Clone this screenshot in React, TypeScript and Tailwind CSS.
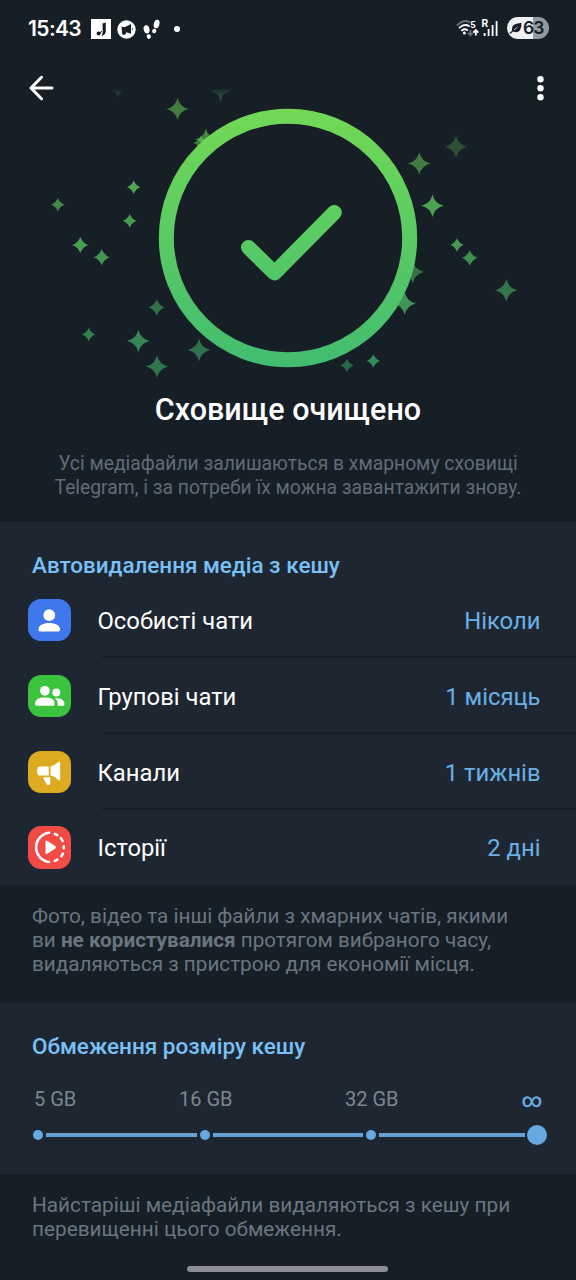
import type { ReactNode } from 'react';

type Star = { x: number; y: number; r: number; o: number };

const stars: Star[] = [
  { x: 177.5, y: 109, r: 11, o: 0.5 },
  { x: 206, y: 139.5, r: 11, o: 0.55 },
  { x: 201, y: 143, r: 7.5, o: 0.5 },
  { x: 133.7, y: 187.3, r: 6.7, o: 0.75 },
  { x: 57.8, y: 204.7, r: 6.7, o: 0.6 },
  { x: 129.7, y: 220.8, r: 6.9, o: 0.72 },
  { x: 80.3, y: 245, r: 8, o: 0.75 },
  { x: 101.7, y: 257.3, r: 8, o: 0.7 },
  { x: 156.7, y: 307.5, r: 8, o: 0.5 },
  { x: 88.7, y: 334.5, r: 6.7, o: 0.6 },
  { x: 138.3, y: 341, r: 11.2, o: 0.65 },
  { x: 157, y: 366.5, r: 11.2, o: 0.55 },
  { x: 199, y: 350, r: 11.2, o: 0.52 },
  { x: 456, y: 146.7, r: 11.2, o: 0.28 },
  { x: 419.3, y: 163.5, r: 11.2, o: 0.52 },
  { x: 432.5, y: 205.7, r: 11.2, o: 0.75 },
  { x: 457, y: 245, r: 6.7, o: 0.72 },
  { x: 469.7, y: 258, r: 7.7, o: 0.65 },
  { x: 506.3, y: 290.2, r: 11.2, o: 0.52 },
  { x: 412.7, y: 272, r: 11.2, o: 0.5 },
  { x: 404.7, y: 303.5, r: 11.2, o: 0.72 },
  { x: 347, y: 365.5, r: 6.7, o: 0.45 },
  { x: 373.3, y: 361, r: 6.7, o: 0.7 },
];

function starPath({ x, y, r }: Star) {
  // small stars are a bit fatter
  const k = r < 9 ? r * 0.28 : r * 0.19;
  return `M${x} ${y - r}Q${x + k} ${y - k} ${x + r} ${y}Q${x + k} ${y + k} ${x} ${y + r}Q${x - k} ${y + k} ${x - r} ${y}Q${x - k} ${y - k} ${x} ${y - r}Z`;
}

function StatusBar() {
  return (
    <div className="flex h-14 items-center justify-between pl-7 pr-[27px] text-white">
      <div className="flex items-center">
        <span className="w-[54px] whitespace-nowrap pt-px font-['Inter'] text-[21px] font-semibold leading-7 tracking-[-0.6px]">15:43</span>
        <svg className="ml-[9px] mt-0.5 h-5 w-5" viewBox="0 0 20 20">
          <rect width="20" height="20" fill="#fff" />
          <path d="M11.5 4.4L14.8 3.6V12Q14.8 16 10.5 17Q11.7 14.8 11.7 12.8Z" fill="#161e26" />
          <circle cx="7.6" cy="14.6" r="2" fill="#161e26" />
          <path d="M8.8 15L10.6 12" stroke="#161e26" />
        </svg>
        <svg className="ml-[6px] mt-0.5 h-[19px] w-[19px]" viewBox="0 0 19 19">
          <circle cx="9.5" cy="9.5" r="9.2" fill="#fff" />
          <path d="M4.5 6.6L7.5 7.2L14 4V13.8L9.5 12.3L8 14.8H5.4L5 12.5Z" fill="#161e26" />
          <path d="M15.2 7.2Q17 9 15.2 11" fill="#161e26" />
        </svg>
        <svg className="ml-[7px] mt-0.5 h-[21px] w-[18px]" viewBox="0 0 18 21">
          <g fill="#fff">
            <ellipse cx="3.6" cy="10.4" rx="2.9" ry="4.2" transform="rotate(-14 3.6 10.4)" />
            <ellipse cx="5.8" cy="17.6" rx="2.1" ry="2.3" transform="rotate(-14 5.8 17.6)" />
            <ellipse cx="13.6" cy="5" rx="2.8" ry="4.4" transform="rotate(14 13.6 5)" />
            <ellipse cx="11.2" cy="12" rx="2.1" ry="2.3" transform="rotate(14 11.2 12)" />
          </g>
        </svg>
        <span className="ml-[13px] mt-0.5 h-1.5 w-1.5 rounded-full bg-white" />
      </div>
      <div className="flex items-center">
        <svg className="h-5 w-11" viewBox="0 0 44 20">
          <g fill="none" strokeLinecap="round" strokeWidth="1.9">
            <path d="M1.5 7Q8 .8 13.5 4.2" stroke="#69707a" />
            <path d="M3.6 9.6Q8 5.5 13 8" stroke="#fff" />
            <path d="M6 12.4Q8.4 10.2 11.2 12" stroke="#fff" />
          </g>
          <circle cx="8.4" cy="15" r="1.5" fill="#fff" />
          <path d="M14.3 12V17M12 14.8L14.3 17.3L16.6 14.8" stroke="#69707a" strokeWidth="1.8" fill="none" />
          <path d="M19.8 17.5V13M17.3 14.6L19.8 12L22.3 14.6" stroke="#fff" strokeWidth="1.8" fill="none" />
          <text x="14.2" y="10" fill="#fff" fontFamily="Roboto" fontWeight="700" fontSize="9.5">5</text>
          <text x="25.5" y="9" fill="#fff" fontFamily="Roboto" fontWeight="700" fontSize="10.5">R</text>
          <path d="M28.6 15V18M32.6 11V18M36.6 7V18M40.6 3V18" stroke="#fff" strokeWidth="1.8" />
        </svg>
        <div className="ml-[7px] flex h-[22px] w-[42px] items-center rounded-full bg-linear-to-r from-[#edf0f4] from-63% to-[#929aa2] to-63% text-[#161e26]">
          <svg className="ml-0.5 h-[13px] w-[13px]" viewBox="0 0 13 13">
            <path d="M12.5 .8Q12.7 6 10.8 8.6Q8.3 11.5 4 9.6L1.3 12L.4 11L3 8.7Q2.4 3.8 6 2.3Q8.5 1.4 12.5 .8Z" fill="#161e26" />
            <path d="M5 8L8.500 5" stroke="#edf0f4" strokeWidth=".8" />
          </svg>
          <span className="ml-px font-['Inter'] text-[17.5px] font-semibold leading-[22px] tracking-[-1px]">63</span>
        </div>
      </div>
    </div>
  );
}

function Header() {
  return (
    <div className="relative z-10 flex h-16 items-center justify-between pl-[29px] pr-[32.5px]">
      <svg className="h-[26px] w-[26px]" viewBox="0 0 26 26" fill="none" stroke="#fff" strokeWidth="3" strokeLinecap="round" strokeLinejoin="round">
        <path d="M23 13H2.5M12.5 2.3L2 13L12.5 23.7" />
      </svg>
      <svg className="h-[26px] w-[7px]" viewBox="0 0 7 26" fill="#fff">
        <circle cx="3.5" cy="4.2" r="3.2" />
        <circle cx="3.5" cy="13.2" r="3.2" />
        <circle cx="3.5" cy="22.2" r="3.2" />
      </svg>
    </div>
  );
}

function DoneArt() {
  return (
    <svg className="-mt-10 block h-[304px] w-full" viewBox="0 80 576 304">
      <defs>
        <linearGradient id="green" gradientUnits="userSpaceOnUse" x1="288" y1="109" x2="288" y2="367">
          <stop offset="0" stopColor="#72d956" />
          <stop offset="1" stopColor="#42bc70" />
        </linearGradient>
        <linearGradient id="fade" gradientUnits="userSpaceOnUse" x1="0" y1="88" x2="0" y2="102">
          <stop offset="0" stopColor="#5fc25c" stopOpacity="0.06" />
          <stop offset="1" stopColor="#5fc25c" stopOpacity="0.4" />
        </linearGradient>
      </defs>
      <path d="M112 90.5H123.5Q119 92 117.7 97Q116.5 92 112 90.5Z" fill="url(#fade)" />
      <path d="M210 91Q216 88.5 220.5 89.5Q225 88.5 231 91Q222 92.5 220.5 102Q219 92.5 210 91Z" fill="url(#fade)" />
      {stars.map((s) => (
        <path key={`${s.x}-${s.y}`} d={starPath(s)} fill="url(#green)" opacity={s.o} />
      ))}
      <circle cx="288" cy="238" r="121.7" fill="#161e26" stroke="url(#green)" strokeWidth="15" />
      <path d="M248.5 247.5L274.5 273L334.3 212.5" fill="none" stroke="url(#green)" strokeWidth="15" strokeLinecap="round" strokeLinejoin="round" />
    </svg>
  );
}

const personIcon = (
  <g fill="#fff">
    <circle cx="21" cy="16" r="5.8" />
    <path d="M10.3 30.5C10.3 25.8 15 23.7 21 23.7S31.7 25.8 31.7 30.5Q31.7 32 30.2 32H11.8Q10.3 32 10.3 30.5Z" />
  </g>
);

const groupIcon = (
  <g fill="#fff">
    <circle cx="16.7" cy="15.6" r="4.8" />
    <circle cx="28" cy="17.3" r="3.9" />
    <path d="M7 28C7 24 11 22.3 16.7 22.3S26.3 24 26.3 28V29.2Q26.3 30.3 25.2 30.3H8.1Q7 30.3 7 29.2Z" />
    <path d="M26.5 23.1C32 22.5 36 24.6 36 28.4V29.2Q36 30.3 35 30.3H29.3V28Q29.3 24.8 26.5 23.1Z" />
  </g>
);

const channelIcon = (
  <g fill="#fff">
    <path d="M20.5 15.2H12.5Q9 15.2 9 18.5V21Q9 24.3 12.5 24.3H20.5Z" />
    <path d="M22.3 15.2Q26.5 14.5 29.5 11.2Q31.8 9.4 31.8 12V27.5Q31.8 30 29.5 28.3Q26.5 25 22.3 24.3Z" />
    <path d="M14.8 26H22V32Q22 33.5 20.5 33.5H19.7Q18.5 33.5 18 32.3Z" />
  </g>
);

const storyIcon = (
  <g>
    <g fill="none" stroke="#fff" strokeWidth="2.5" strokeLinecap="round">
      <path d="M20.8 6.7A14.5 14.5 0 0 0 20.8 35.5" />
      <path d="M26.5 7.7L29 9M32.5 12L34.2 14.7M35.3 20V22M34.5 27.2L33 29.8M29 33.2L26.5 34.5" />
    </g>
    <path d="M17.3 15.7Q17.3 13.7 19.1 14.8L27 19.8Q28.6 21.1 27 22.3L19.1 27.5Q17.3 28.5 17.3 26.5Z" fill="#fff" />
  </g>
);

type Item = { label: string; value: string; color: string; icon: ReactNode };

const items: Item[] = [
  { label: 'Особисті чати', value: 'Ніколи', color: 'bg-[#3f78ec]', icon: personIcon },
  { label: 'Групові чати', value: '1 місяць', color: 'bg-[#3cc33e]', icon: groupIcon },
  { label: 'Канали', value: '1 тижнів', color: 'bg-[#dcab20]', icon: channelIcon },
  { label: 'Історії', value: '2 дні', color: 'bg-[#f14b46]', icon: storyIcon },
];

function Row({ item, last }: { item: Item; last: boolean }) {
  return (
    <div className={last ? 'flex h-[75px] items-center pl-7' : 'flex h-[76px] items-center pl-7'}>
      <div className={`h-[42.5px] w-[42.5px] shrink-0 rounded-[13px] ${item.color}`}>
        <svg className="h-full w-full" viewBox="0 0 42 42">{item.icon}</svg>
      </div>
      <div className="ml-[27px] flex h-full flex-1 flex-col">
        <div className={`flex flex-1 items-center justify-between pr-[35.5px] text-[23.8px] ${last ? 'pt-[3px]' : 'pt-1.5'}`}>
          <span className="text-white">{item.label}</span>
          <span className="text-[#6ab0e6]">{item.value}</span>
        </div>
        {!last && <div className="ml-1 h-0.5 bg-[#161e26]" />}
      </div>
    </div>
  );
}

function CacheSlider() {
  return (
    <div className="px-[33px]">
      <div className="flex h-7 items-center text-[20px] text-[#7b8691]">
        <span className="w-[146px] pl-px">5 GB</span>
        <span className="w-[166px]">16 GB</span>
        <span className="w-[176.5px]">32 GB</span>
        <span className="pt-0.5 text-[20px] font-medium text-[#6ab0e6]">∞</span>
      </div>
      <div className="-mr-1 mt-3 flex h-5 items-center">
        {[0, 1, 2].map((i) => (
          <div key={i} className={i < 2 ? 'flex w-[166.5px] items-center gap-[3px] pr-[3px]' : 'flex flex-1 items-center gap-[3px] pr-0.5'}>
            <span className="h-2.5 w-2.5 rounded-full bg-[#66a9e0]" />
            <span className="h-1 flex-1 bg-[#66a1d3]" />
          </div>
        ))}
        <span className="h-5 w-5 rounded-full bg-[#66a9e0]" />
      </div>
    </div>
  );
}

export default function App() {
  return (
    <div className="flex h-[1280px] w-[576px] flex-col overflow-hidden bg-[#161e26] font-['Roboto',sans-serif]">
      <StatusBar />
      <Header />
      <div className="h-[402px] text-center">
        <DoneArt />
        <h1 className="mt-[6px] text-[30.5px] font-medium leading-10 text-white">Сховище очищено</h1>
        <p className="mt-[22px] whitespace-nowrap text-[19.3px] leading-[23.5px] text-[#626b76]">
          Усі медіафайли залишаються в хмарному сховищі
          <br />
          Telegram, і за потреби їх можна завантажити знову.
        </p>
      </div>

      <section className="h-[363px] bg-[#1e2731]">
        <h2 className="h-[60px] pl-8 pt-[27px] text-[22.45px] font-medium leading-8 text-[#79c0f7]">Автовидалення медіа з кешу</h2>
        {items.map((item, i) => (
          <Row key={item.label} item={item} last={i === items.length - 1} />
        ))}
      </section>

      <p className="h-[118px] whitespace-nowrap pl-8 pt-[19px] text-[20.7px] leading-6 text-[#6b7580]">
        Фото, відео та інші файли з хмарних чатів, якими
        <br />
        ви <b className="font-bold">не користувалися</b> протягом вибраного часу,
        <br />
        видаляються з пристрою для економії місця.
      </p>

      <section className="h-[171px] bg-[#1e2731]">
        <h2 className="h-[82px] pl-8 pt-[27px] text-[22.5px] font-medium leading-8 text-[#79c0f7]">Обмеження розміру кешу</h2>
        <CacheSlider />
      </section>

      <p className="whitespace-nowrap pl-8 pt-[19px] text-[20.75px] leading-6 text-[#6b7580]">
        Найстаріші медіафайли видаляються з кешу при
        <br />
        перевищенні цього обмеження.
      </p>
      <div className="mb-2 ml-[187px] mt-auto h-[6px] w-[201px] rounded-full bg-[#8b8f93]" />
    </div>
  );
}
